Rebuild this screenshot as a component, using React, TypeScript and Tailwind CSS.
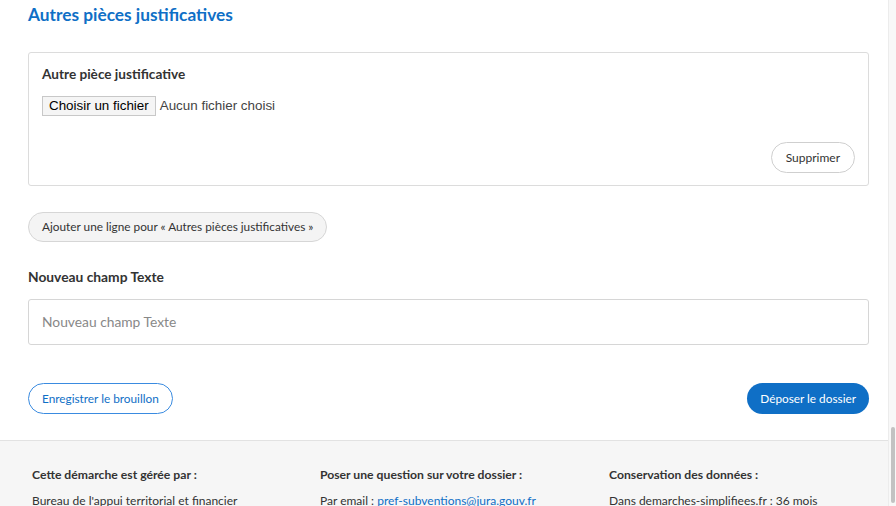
import React from "react";

const FONT = "font-['Lato','Noto_Sans',sans-serif]";

export default function App() {
  return (
    <div className={`flex h-[506px] w-[896px] overflow-hidden bg-white text-[#333] ${FONT}`}>
      <div className="flex w-[888px] flex-col">
        <main className="flex flex-col px-[28px] pb-[26px] pt-[5px] pr-[19px]">
          <h2 className="text-[17.3px] font-bold leading-[20px] text-[#0f6fc6]">
            Autres pièces justificatives
          </h2>

          {/* repeatable block */}
          <div className="mt-[27px] flex h-[134px] flex-col rounded-[3px] border border-[#dcdcdc] px-[13px] pt-[13px] pb-[12px]">
            <label className="text-[13.6px] font-bold leading-[16px] text-[#333]">
              Autre pièce justificative
            </label>
            <div className="mt-[14px] flex items-center gap-[4px] font-['Liberation_Sans',sans-serif] text-[13.4px] text-[#333]">
              <span className="flex h-[20px] items-center border border-[#c8c8c8] bg-[#f5f5f5] px-[6px] text-black">
                Choisir un fichier
              </span>
              <span className="text-[#444]">Aucun fichier choisi</span>
            </div>
            <div className="mt-auto flex justify-end">
              <button className="h-[31px] rounded-full border border-[#cfcfcf] bg-white px-[14px] text-[12px] text-[#333]">
                Supprimer
              </button>
            </div>
          </div>

          <div className="mt-[26px]">
            <button className="h-[30px] rounded-full border border-[#d6d6d6] bg-[#f4f4f4] px-[13px] text-[11.8px] text-[#333]">
              Ajouter une ligne pour « Autres pièces justificatives »
            </button>
          </div>

          <label className="mt-[27px] text-[13.8px] font-bold leading-[16px] text-[#333]">
            Nouveau champ Texte
          </label>
          <div className="mt-[14px] flex h-[46px] items-center rounded-[3px] border border-[#d6d6d6] px-[13px] text-[13.8px] text-[#888]">
            Nouveau champ Texte
          </div>

          <div className="mt-[38px] flex items-center justify-between">
            <button className="h-[31px] rounded-full border border-[#3a8be0] bg-white px-[13px] text-[11.8px] text-[#0f6fc6]">
              Enregistrer le brouillon
            </button>
            <button className="h-[31px] rounded-full bg-[#0f6fc6] px-[13px] text-[11.8px] text-white">
              Déposer le dossier
            </button>
          </div>
        </main>

        <footer className="flex flex-1 border-t border-[#e2e2e2] bg-[#f6f6f6] px-[32px] pt-[26px] text-[12px] text-[#333]">
          <div className="w-[288px]">
            <h3 className="text-[12.2px] font-bold leading-[16px]">Cette démarche est gérée par :</h3>
            <p className="mt-[10px] leading-[16px]">Bureau de l'appui territorial et financier</p>
          </div>
          <div className="w-[289px]">
            <h3 className="text-[12.2px] font-bold leading-[16px]">Poser une question sur votre dossier :</h3>
            <p className="mt-[10px] leading-[16px]">
              Par email : <span className="text-[#0f6fc6]">pref-subventions@jura.gouv.fr</span>
            </p>
          </div>
          <div>
            <h3 className="text-[12.2px] font-bold leading-[16px]">Conservation des données :</h3>
            <p className="mt-[10px] leading-[16px]">Dans demarches-simplifiees.fr : 36 mois</p>
          </div>
        </footer>
      </div>

      {/* scrollbar */}
      <div className="flex w-[8px] flex-col border-l border-[#ececec] bg-[#f8f8f8]">
        <div className="mx-auto mt-[427px] h-[76px] w-[4px] rounded-full bg-[#c2c2c2]" />
      </div>
    </div>
  );
}
